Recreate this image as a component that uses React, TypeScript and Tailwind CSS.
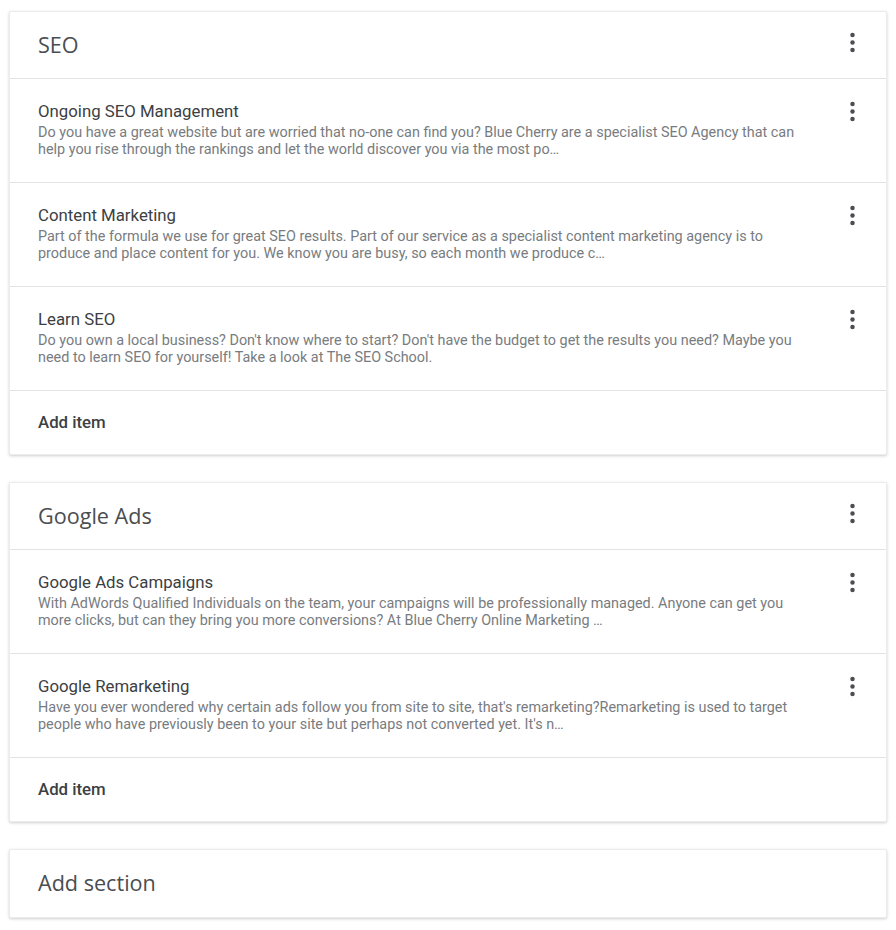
import React from 'react';

type Item = { title: string; text: string };
type Section = { name: string; items: Item[] };

const sections: Section[] = [
  {
    name: 'SEO',
    items: [
      {
        title: 'Ongoing SEO Management',
        text: 'Do you have a great website but are worried that no-one can find you? Blue Cherry are a specialist SEO Agency that can help you rise through the rankings and let the world discover you via the most po…',
      },
      {
        title: 'Content Marketing',
        text: 'Part of the formula we use for great SEO results. Part of our service as a specialist content marketing agency is to produce and place content for you. We know you are busy, so each month we produce c…',
      },
      {
        title: 'Learn SEO',
        text: "Do you own a local business? Don't know where to start? Don't have the budget to get the results you need? Maybe you need to learn SEO for yourself! Take a look at The SEO School.",
      },
    ],
  },
  {
    name: 'Google Ads',
    items: [
      {
        title: 'Google Ads Campaigns',
        text: 'With AdWords Qualified Individuals on the team, your campaigns will be professionally managed. Anyone can get you more clicks, but can they bring you more conversions? At Blue Cherry Online Marketing …',
      },
      {
        title: 'Google Remarketing',
        text: "Have you ever wondered why certain ads follow you from site to site, that's remarketing?Remarketing is used to target people who have previously been to your site but perhaps not converted yet. It's n…",
      },
    ],
  },
];

// material "more_vert"
function Kebab() {
  return (
    <button className="w-[29px] h-[29px] flex items-center justify-center text-[#4a4d51]" aria-label="More">
      <svg width="29" height="29" viewBox="0 0 24 24" fill="currentColor">
        <circle cx="12" cy="5.8" r="1.85" />
        <circle cx="12" cy="12" r="1.85" />
        <circle cx="12" cy="18.2" r="1.85" />
      </svg>
    </button>
  );
}

const card = 'bg-white rounded-[2px] border border-[#ececec] shadow-[0_1px_3px_rgba(60,64,67,0.25)]';

export default function App() {
  return (
    <div className="min-h-screen bg-white font-['Roboto',sans-serif] px-[9px] pt-[11px] pb-6 flex flex-col gap-[27px]">
      {sections.map((s) => (
        <div key={s.name} className={card}>
          {/* section header */}
          <div className="h-[67px] flex items-center justify-between pl-[28px] pr-[19px] border-b border-[#e3e3e3]">
            <h2 className="font-['Open_Sans',sans-serif] text-[21.6px] text-[#4a4d51]">{s.name}</h2>
            <div className="-mt-[6px]">
              <Kebab />
            </div>
          </div>

          {s.items.map((it) => (
            <div key={it.title} className="h-[104px] flex justify-between pl-[28px] pr-[19px] pt-[22px] border-b border-[#e3e3e3]">
              <div className="w-[770px]">
                <div className="text-[16.8px] leading-[20px] text-[#3c4043]">{it.title}</div>
                <p className="mt-[3px] text-[14.4px] leading-[17.3px] text-[#787c80]">{it.text}</p>
              </div>
              <div className="-mt-[4px]">
                <Kebab />
              </div>
            </div>
          ))}

          <div className="h-[63px] flex items-center pl-[28px]">
            <span className="text-[16.8px] font-medium text-[#3c4043]">Add item</span>
          </div>
        </div>
      ))}

      <div className={card}>
        <div className="h-[67px] flex items-center pl-[28px]">
          <span className="font-['Open_Sans',sans-serif] text-[21.6px] text-[#4a4d51]">Add section</span>
        </div>
      </div>
    </div>
  );
}
